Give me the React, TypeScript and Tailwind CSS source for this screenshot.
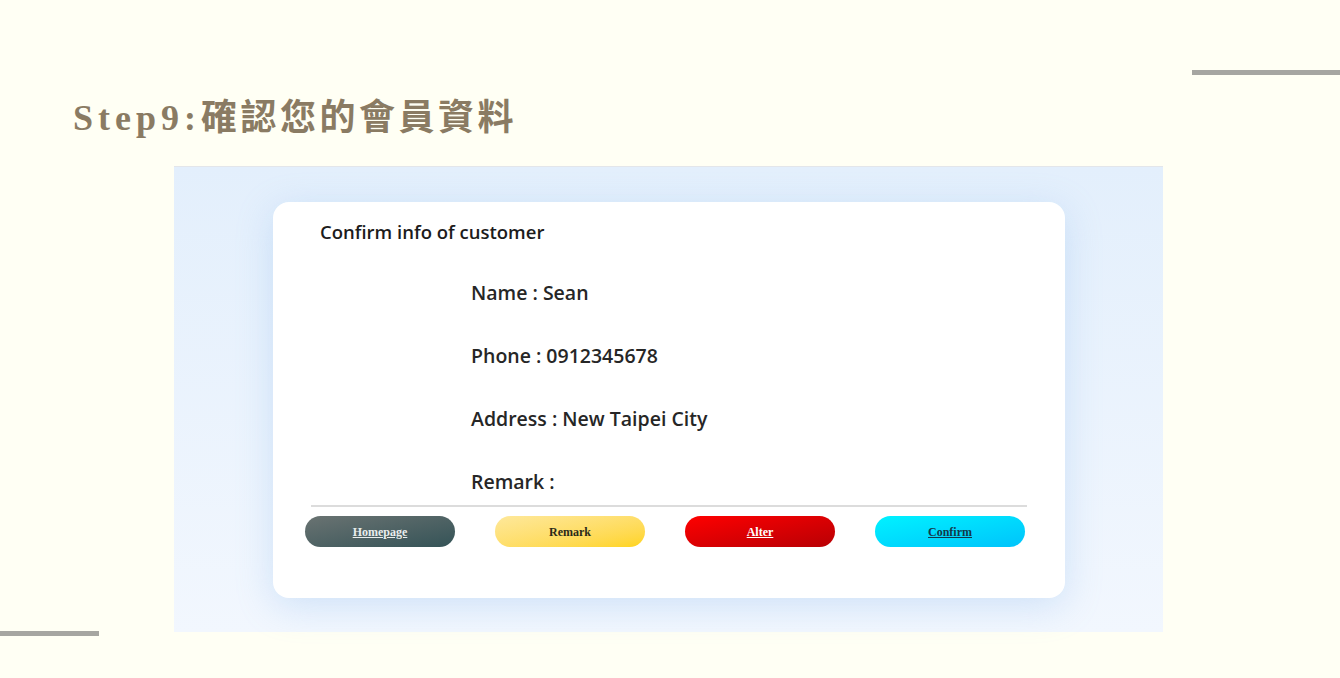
export default function App() {
  const rows = ['Name : Sean', 'Phone : 0912345678', 'Address : New Taipei City', 'Remark :']

  return (
    <div className="relative h-[678px] w-[1340px] overflow-hidden bg-[#fffff4]">
      {/* decorative bars */}
      <div className="absolute left-[1192px] top-[70px] h-[5px] w-[148px] bg-[#a6a6a1]" />
      <div className="absolute left-0 top-[631px] h-[5px] w-[99px] bg-[#a6a6a1]" />

      <div className="flex flex-col pt-[90px]">
        <h1
          className="pl-[73px] text-[36px] font-bold leading-[56px] tracking-[3.5px] text-[#8a7b63]"
          style={{ fontFamily: '"Liberation Serif", "Noto Sans CJK TC", serif' }}
        >
          <span className="tracking-[5px]">Step9:</span>確認您的會員資料
        </h1>

        {/* screenshot of the form */}
        <div className="ml-[174px] mt-[20px] h-[466px] w-[989px] border-t border-[#e3e6ea] bg-gradient-to-b from-[#e3effc] to-[#f2f7fe] pt-[35px]">
          <div
            className="ml-[99px] flex h-[396px] w-[792px] flex-col rounded-[16px] bg-white shadow-[0_8px_36px_rgba(130,180,235,0.3)]"
            style={{ fontFamily: '"Open Sans", "Noto Sans", sans-serif' }}
          >
            <div className="pl-[47px] pt-[18px] text-[18.5px] font-semibold leading-[24px] text-[#1c1c1c]">
              Confirm info of customer
            </div>
            <div className="flex flex-col gap-[35px] pl-[198px] pt-[35px]">
              {rows.map((r) => (
                <div key={r} className="text-[19.5px] font-semibold leading-[28px] text-[#262626]">
                  {r}
                </div>
              ))}
            </div>
            <div className="mx-[38px] mt-[9px] h-[2px] bg-[#dcdcdc]" />
            <div
              className="mt-[9px] flex gap-[40px] pl-[32px]"
              style={{ fontFamily: '"Liberation Serif", serif' }}
            >
              <div className="flex h-[31px] w-[150px] items-center justify-center rounded-full bg-gradient-to-br from-[#6a7372] to-[#345357] text-[12px] font-bold text-[#e9eded] underline">
                Homepage
              </div>
              <div className="flex h-[31px] w-[150px] items-center justify-center rounded-full bg-gradient-to-br from-[#fee89a] to-[#ffd413] text-[12px] font-bold text-[#2a2a1a]">
                Remark
              </div>
              <div className="flex h-[31px] w-[150px] items-center justify-center rounded-full bg-gradient-to-br from-[#ff0000] to-[#b80004] text-[12px] font-bold text-white underline">
                Alter
              </div>
              <div className="flex h-[31px] w-[150px] items-center justify-center rounded-full bg-gradient-to-br from-[#00f2ff] to-[#00c3fb] text-[12px] font-bold text-[#13384a] underline">
                Confirm
              </div>
            </div>
          </div>
        </div>
      </div>
    </div>
  )
}
